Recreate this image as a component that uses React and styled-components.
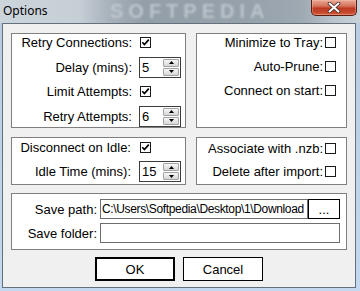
import React from 'react';
import styled, { createGlobalStyle } from 'styled-components';

const Global = createGlobalStyle`
  html, body { margin: 0; padding: 0; background: #c3d7ec; }
  body { font-family: "Liberation Sans", Arial, sans-serif; font-size: 13px; color: #000; }
  * { box-sizing: border-box; }
`;

const Window = styled.div`
  width: 360px;
  height: 291px;
  display: flex;
  flex-direction: column;
  overflow: hidden;
  background: linear-gradient(180deg, #b8cbdf 0%, #c4d9ef 100%);
`;

const TitleBar = styled.div`
  position: relative;
  flex: none;
  height: 23px;
  display: flex;
  align-items: flex-start;
  justify-content: space-between;
  background: linear-gradient(
    90deg,
    #cdd5dc 0%,
    #c6ced6 22%,
    #a9b3bc 30%,
    #939ea8 40%,
    #96a1ab 70%,
    #9fa9b2 84%,
    #b9c2ca 92%,
    #cad2d9 100%
  );
`;

const Title = styled.span`
  position: relative;
  z-index: 1;
  padding: 3px 0 0 3px;
  font-family: "Noto Sans", "Open Sans", sans-serif;
  font-size: 12px;
  line-height: 16px;
  color: #000;
`;

const Watermark = styled.span`
  position: absolute;
  left: 110px;
  top: 1px;
  font-family: "Liberation Sans", Arial, sans-serif;
  font-weight: 700;
  font-size: 20px;
  line-height: 21px;
  letter-spacing: 5px;
  color: rgba(198, 205, 212, 0.8);
  filter: blur(1.1px);
  white-space: nowrap;
`;

const CloseButton = styled.div`
  position: relative;
  z-index: 1;
  width: 46px;
  height: 16px;
  margin-right: 3px;
  border: 1px solid #5a1d12;
  border-top: none;
  border-radius: 0 0 5px 5px;
  background: linear-gradient(180deg, #e9a996 0%, #d7735b 40%, #bd3a22 55%, #c74a2f 85%, #d9664a 100%);
  box-shadow: inset 0 0 0 1px rgba(255, 200, 180, 0.35);
  display: flex;
  align-items: center;
  justify-content: center;
`;

const Client = styled.div`
  flex: 1;
  margin: 0 4px 3px 2px;
  border: 1px solid #62707e;
  background: #f0f0f0;
  display: flex;
  flex-direction: column;
  padding: 9px 8px 6px;
`;

const BoxRow = styled.div`
  display: flex;
  gap: 10px;
  margin-top: ${(p) => p.$mt || 0}px;
`;

const GroupBox = styled.div`
  width: ${(p) => p.$w}px;
  height: ${(p) => p.$h}px;
  border: 1px solid #7f7f7f;
  background: #fff;
  display: flex;
  flex-direction: column;
  justify-content: ${(p) => p.$justify || 'flex-start'};
  gap: ${(p) => p.$gap || 0}px;
  padding: ${(p) => p.$pad || '0'};
`;

const FieldRow = styled.div`
  display: flex;
  align-items: center;
  height: ${(p) => p.$h}px;
  flex: none;
`;

const FieldLabel = styled.span`
  width: ${(p) => p.$w}px;
  margin-right: ${(p) => p.$gap}px;
  text-align: right;
  white-space: nowrap;
  line-height: 15px;
`;

const RightRow = styled.div`
  display: flex;
  align-items: center;
  justify-content: flex-end;
  gap: 2px;
  height: 17px;
  padding-right: 10px;
  white-space: nowrap;
  line-height: 15px;
`;

const CheckBoxBox = styled.span`
  width: 11px;
  height: 11px;
  flex: none;
  margin-left: ${(p) => p.$ml || 0}px;
  border: 1px solid #1a1a1a;
  background: #fff;
  display: inline-flex;
  align-items: center;
  justify-content: center;
`;

const Check = ({ checked, ml }) => (
  <CheckBoxBox $ml={ml}>
    {checked && (
      <svg width="9" height="9" viewBox="0 0 9 9">
        <path d="M1.3 4.3 L3.4 6.6 L7.8 1.6" fill="none" stroke="#000" strokeWidth="1.7" />
      </svg>
    )}
  </CheckBoxBox>
);

const SpinBox = styled.div`
  width: 42px;
  height: 21px;
  border: 1px solid #3c3c3c;
  background: #fff;
  display: flex;
  padding: 1px;
`;

const SpinValue = styled.span`
  flex: 1;
  padding-left: 1px;
  line-height: 17px;
`;

const SpinButtons = styled.div`
  width: 16px;
  display: flex;
  flex-direction: column;
  gap: 1px;
`;

const SpinButton = styled.div`
  flex: 1;
  border: 1px solid #a3a3a3;
  border-radius: 1px;
  background: linear-gradient(180deg, #f7f7f7 0%, #e6e6e6 50%, #d6d6d6 100%);
  display: flex;
  align-items: center;
  justify-content: center;
`;

const Arrow = ({ up }) => (
  <svg width="5" height="3" viewBox="0 0 5 3">
    <path d={up ? 'M0 3 L2.5 0 L5 3 Z' : 'M0 0 L2.5 3 L5 0 Z'} fill="#000" />
  </svg>
);

const Spinner = ({ value }) => (
  <SpinBox>
    <SpinValue>{value}</SpinValue>
    <SpinButtons>
      <SpinButton>
        <Arrow up />
      </SpinButton>
      <SpinButton>
        <Arrow />
      </SpinButton>
    </SpinButtons>
  </SpinBox>
);

const PathRow = styled.div`
  display: flex;
  align-items: center;
  height: 20px;
`;

const PathLabel = styled.span`
  width: 85px;
  margin-right: 3px;
  text-align: right;
  white-space: nowrap;
`;

const FieldWrap = styled.div`
  flex: 1;
  height: 20px;
  display: flex;
`;

const TextField = styled.div`
  flex: 1;
  height: 20px;
  border: 1px solid #6e6e6e;
  background: #fff;
  padding-left: 1px;
  font-size: 12px;
  letter-spacing: -0.35px;
  line-height: 18px;
  white-space: nowrap;
  overflow: hidden;
`;

const BrowseButton = styled.div`
  width: 32px;
  height: 20px;
  border: 1px solid #000;
  background: #fff;
  display: flex;
  align-items: center;
  justify-content: center;
  line-height: 18px;
  padding-top: 1px;
`;

const ButtonRow = styled.div`
  display: flex;
  justify-content: center;
  gap: 8px;
  margin-top: 7px;
`;

const DialogButton = styled.div`
  width: 80px;
  height: 24px;
  border: ${(p) => (p.$default ? '2px' : '1px')} solid #000;
  background: #fff;
  display: flex;
  align-items: center;
  justify-content: center;
`;

export default function App() {
  return (
    <>
      <Global />
      <Window>
        <TitleBar>
          <Watermark>SOFTPEDIA</Watermark>
          <Title>Options</Title>
          <CloseButton>
            <svg width="14" height="11" viewBox="0 0 14 11">
              <path d="M2.5 1.5 L11.5 9.5 M11.5 1.5 L2.5 9.5" stroke="#3d2a2a" strokeWidth="3.6" strokeLinecap="round" />
              <path d="M2.5 1.5 L11.5 9.5 M11.5 1.5 L2.5 9.5" stroke="#fff" strokeWidth="2" strokeLinecap="round" />
            </svg>
          </CloseButton>
        </TitleBar>
        <Client>
          <BoxRow>
            <GroupBox $w={175} $h={95} $justify="space-between">
              <FieldRow $h={17}>
                <FieldLabel $w={120} $gap={7}>Retry Connections:</FieldLabel>
                <Check checked ml={1} />
              </FieldRow>
              <FieldRow $h={21}>
                <FieldLabel $w={120} $gap={7}>Delay (mins):</FieldLabel>
                <Spinner value="5" />
              </FieldRow>
              <FieldRow $h={17}>
                <FieldLabel $w={120} $gap={7}>Limit Attempts:</FieldLabel>
                <Check checked ml={1} />
              </FieldRow>
              <FieldRow $h={21}>
                <FieldLabel $w={120} $gap={7}>Retry Attempts:</FieldLabel>
                <Spinner value="6" />
              </FieldRow>
            </GroupBox>
            <GroupBox $w={151} $h={95} $gap={7}>
              <RightRow>
                Minimize to Tray:
                <Check />
              </RightRow>
              <RightRow>
                Auto-Prune:
                <Check />
              </RightRow>
              <RightRow>
                Connect on start:
                <Check />
              </RightRow>
            </GroupBox>
          </BoxRow>
          <BoxRow $mt={9}>
            <GroupBox $w={175} $h={48} $gap={5} $pad="1px 0 0 0">
              <FieldRow $h={17}>
                <FieldLabel $w={119} $gap={8}>Disconnect on Idle:</FieldLabel>
                <Check checked ml={1} />
              </FieldRow>
              <FieldRow $h={21}>
                <FieldLabel $w={119} $gap={8}>Idle Time (mins):</FieldLabel>
                <Spinner value="15" />
              </FieldRow>
            </GroupBox>
            <GroupBox $w={151} $h={48} $gap={6} $pad="2px 0 0 0">
              <RightRow>
                Associate with .nzb:
                <Check />
              </RightRow>
              <RightRow>
                Delete after import:
                <Check />
              </RightRow>
            </GroupBox>
          </BoxRow>
          <BoxRow $mt={8}>
            <GroupBox $w={336} $h={57} $gap={4} $pad="5px 6px 0 0">
              <PathRow>
                <PathLabel>Save path:</PathLabel>
                <FieldWrap>
                  <TextField>C:\Users\Softpedia\Desktop\1\Download</TextField>
                  <BrowseButton>...</BrowseButton>
                </FieldWrap>
              </PathRow>
              <PathRow>
                <PathLabel>Save folder:</PathLabel>
                <FieldWrap>
                  <TextField />
                </FieldWrap>
              </PathRow>
            </GroupBox>
          </BoxRow>
          <ButtonRow>
            <DialogButton $default>OK</DialogButton>
            <DialogButton>Cancel</DialogButton>
          </ButtonRow>
        </Client>
      </Window>
    </>
  );
}
